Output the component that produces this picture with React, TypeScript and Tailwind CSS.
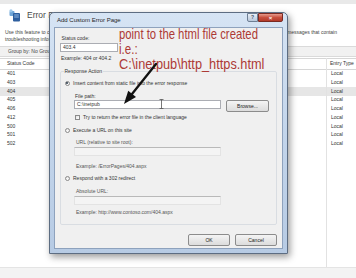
import React from "react"

const codes = ["401", "403", "404", "405", "406", "412", "500", "501", "502"]

function Radio({ checked = false }: { checked?: boolean }) {
  return (
    <span className="flex h-[5px] w-[5px] shrink-0 items-center justify-center rounded-full border-[0.6px] border-[#8a8a8a] bg-gradient-to-b from-[#e6e6e6] to-white">
      {checked && <span className="h-[2.4px] w-[2.4px] rounded-full bg-[#2a3a4a]" />}
    </span>
  )
}

function WinButton({ label, width }: { label: string; width: string }) {
  return (
    <button
      type="button"
      className={`flex h-[12px] ${width} items-center justify-center rounded-[2px] border-[0.6px] border-[#8c8c8c] bg-gradient-to-b from-[#f4f4f4] to-[#dcdcdc] text-[5px] leading-none text-[#222]`}
    >
      {label}
    </button>
  )
}

function ErrorIcon() {
  return (
    <svg width="12" height="13" viewBox="0 0 12 13">
      <rect x="0.5" y="2" width="5" height="5" rx="1" fill="#6fa6d8" />
      <circle cx="2" cy="1.8" r="1.6" fill="#9cc7ea" />
      <rect x="4" y="4" width="7" height="8.5" rx="1" fill="#2e5f9e" />
      <rect x="5.2" y="5.5" width="4.6" height="1" fill="#8fb8e4" />
      <rect x="5.2" y="7.5" width="4.6" height="1" fill="#8fb8e4" />
    </svg>
  )
}

export default function App() {
  return (
    <div className="relative h-[278px] w-[356px] overflow-hidden bg-white font-['Liberation_Sans',Arial,sans-serif] text-[#333]">
      {/* IIS background */}
      <div className="flex h-full flex-col">
        <div className="h-[4px] bg-[#e9e9e9]" />
        <div className="flex h-[22px] items-center gap-[6px] pl-[9px]">
          <ErrorIcon />
          <span className="text-[8.5px] leading-[10px] text-[#4a4a4a]">Error Pages</span>
        </div>
        <div className="mt-[3px] flex justify-between pl-[5px] pr-[19px] text-[5px] leading-[7px] text-[#444]">
          <span>Use this feature to configure HTTP error responses.</span>
          <span>messages that contain</span>
        </div>
        <div className="pl-[5px] text-[5px] leading-[7px] text-[#444]">troubleshooting information.</div>
        <div className="mt-[3px] flex h-[11px] items-center border-y-[0.6px] border-[#dadada] bg-[#f1f1f1] pl-[8px] text-[5px] text-[#444]">
          Group by: No Grouping
        </div>
        <div className="mt-[1px] flex flex-1 text-[5px] text-[#333]">
          <div className="flex flex-1 flex-col">
            <div className="flex h-[11.6px] items-center border-y-[0.6px] border-[#d6d6d6] pl-[7px]">Status Code</div>
            {codes.map((c) => (
              <div key={c} className={`flex h-[8.75px] items-center pl-[7px] ${c === "404" ? "bg-[#e6e6e6]" : ""}`}>
                {c}
              </div>
            ))}
          </div>
          <div className="flex w-[30px] flex-col border-l-[0.6px] border-[#e2e2e2]">
            <div className="flex h-[11.6px] items-center whitespace-nowrap border-y-[0.6px] border-[#d6d6d6] pl-[3px]">
              Entry Type
            </div>
            {codes.map((c) => (
              <div key={c} className={`flex h-[8.75px] items-center pl-[4px] ${c === "404" ? "bg-[#e6e6e6]" : ""}`}>
                Local
              </div>
            ))}
          </div>
        </div>
        <div className="h-[11px] border-t-[0.6px] border-[#e4e4e4] bg-[#f3f3f3]" />
      </div>

      {/* Add Custom Error Page dialog */}
      <div className="absolute left-[49px] top-[12px] flex h-[242px] w-[239px] flex-col rounded-t-[5px] border border-[#5d6d82] bg-gradient-to-b from-[#d6e4f4] via-[#c3d5eb] to-[#b7cbe4] px-[4px] pb-[4px] shadow-[2px_3px_7px_rgba(0,0,0,0.4)]">
        <div className="flex h-[14px] items-center">
          <span className="pl-[3px] text-[6px] leading-none text-[#1e1e1e]">Add Custom Error Page</span>
          <div className="ml-auto flex h-[9px] self-start">
            <span className="flex w-[11px] items-center justify-center rounded-bl-[2px] border-[0.6px] border-[#6d7e94] bg-gradient-to-b from-[#e8eef6] to-[#b9c8db] text-[5px] font-bold leading-none text-[#3b4a5e]">
              ?
            </span>
            <span className="flex w-[25px] items-center justify-center rounded-br-[2px] border-[0.6px] border-[#7a2a22] bg-gradient-to-b from-[#e59a8c] via-[#c84f3d] to-[#b23a2a] text-[6px] font-bold leading-none text-white">
              ×
            </span>
          </div>
        </div>
        <div className="flex flex-1 flex-col border border-[#8ea2bd] bg-[#f0f0f0] text-[5px] leading-[7px] text-[#333]">
          <div className="mt-[6.5px] pl-[6.5px]">Status code:</div>
          <div className="ml-[5px] mt-[1.5px] flex h-[9px] w-[58px] items-center border-[0.6px] border-[#abadb3] bg-white pl-[2px]">
            403.4
          </div>
          <div className="mt-[2.5px] pl-[6px]">Example: 404 or 404.2</div>

          <fieldset className="mx-[5px] mt-[6px] flex flex-col rounded-[2px] border-[0.6px] border-[#d9dde2] pb-[8.5px]">
            <legend className="ml-[3px] px-[0.5px] leading-[7px] text-[#333]">Response Action</legend>
            <div className="mt-[5px] flex h-[7px] items-center gap-[3.5px] pl-[3.5px]">
              <Radio checked />
              <span>Insert content from static file into the error response</span>
            </div>
            <div className="mt-[6px] pl-[14px]">File path:</div>
            <div className="mt-[0.5px] flex h-[11px] items-start gap-[5px] pl-[13px]">
              <div className="flex h-[9px] w-[147px] items-center border-[0.6px] border-[#abadb3] bg-white pl-[2px]">
                C:\inetpub
              </div>
              <WinButton label="Browse..." width="w-[43px]" />
            </div>
            <div className="mt-[2.5px] flex h-[7px] items-center gap-[3px] pl-[14px]">
              <span className="h-[5px] w-[5px] shrink-0 border-[0.6px] border-[#8a8a8a] bg-gradient-to-br from-[#e2e2e2] to-white" />
              <span>Try to return the error file in the client language</span>
            </div>
            <div className="mt-[6px] flex h-[7px] items-center gap-[3.5px] pl-[3.5px]">
              <Radio />
              <span>Execute a URL on this site</span>
            </div>
            <div className="mt-[5px] pl-[15px] text-[#555]">URL (relative to site root):</div>
            <div className="ml-[13px] mt-[1.5px] h-[9px] w-[147px] border-[0.6px] border-[#e3e3e3] border-t-[#b9b9b9] bg-[#f4f4f4]" />
            <div className="mt-[6.5px] pl-[15px] text-[#555]">Example: /ErrorPages/404.aspx</div>
            <div className="mt-[5px] flex h-[7px] items-center gap-[3.5px] pl-[3.5px]">
              <Radio />
              <span>Respond with a 302 redirect</span>
            </div>
            <div className="mt-[6px] pl-[15px] text-[#555]">Absolute URL:</div>
            <div className="ml-[13px] mt-[1.5px] h-[9px] w-[147px] border-[0.6px] border-[#e3e3e3] border-t-[#b9b9b9] bg-[#f4f4f4]" />
            <div className="mt-[3.5px] pl-[15px] text-[#555]">Example: http://www.contoso.com/404.aspx</div>
          </fieldset>

          <div className="mt-[9px] flex justify-end gap-[5px] pr-[5px]">
            <WinButton label="OK" width="w-[42px]" />
            <WinButton label="Cancel" width="w-[42px]" />
          </div>
        </div>
      </div>

      {/* I-beam cursor */}
      <svg className="absolute left-[159px] top-[99px]" width="5" height="10" viewBox="0 0 5 10">
        <path d="M0.5 0.5h4M2.5 0.5v9M0.5 9.5h4" stroke="#555" strokeWidth="0.8" fill="none" />
      </svg>

      {/* annotation */}
      <div className="absolute left-[119px] top-[27px] whitespace-nowrap text-[14.5px] leading-[15px] text-[#ad3a36]">
        <div className="origin-left scale-x-[0.78]">point to the html file created</div>
        <div className="origin-left scale-x-[0.8]">i.e.:</div>
        <div className="origin-left scale-x-[0.88]">C:\inetpub\http_https.html</div>
      </div>
      <svg className="absolute left-[118px] top-[60px]" width="44" height="48" viewBox="0 0 44 48">
        <line x1="38" y1="4" x2="14" y2="34" stroke="#111" strokeWidth="2.3" strokeLinecap="round" />
        <polygon points="6,44 18,36.9 10.2,30.7" fill="#111" />
      </svg>
    </div>
  )
}
